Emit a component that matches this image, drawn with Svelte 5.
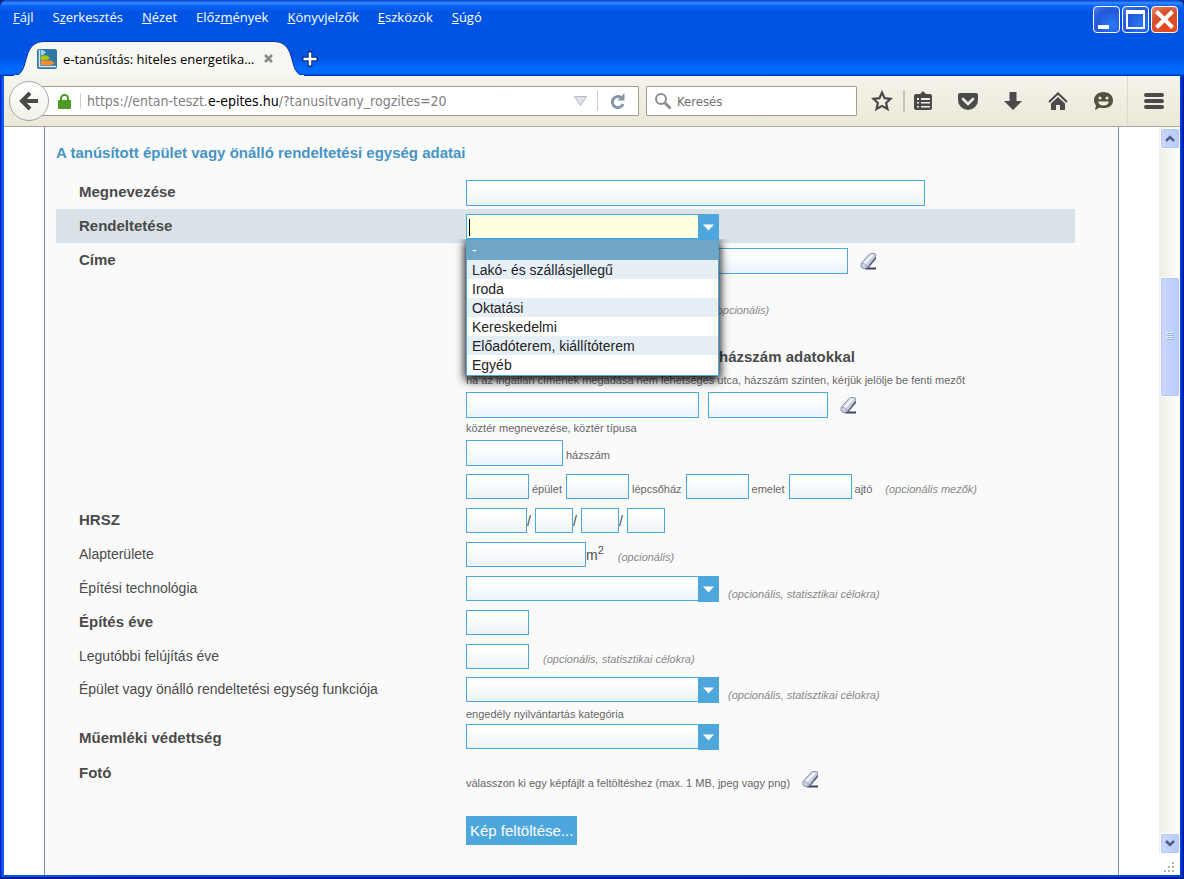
<script>
  const menus = [
    ['', 'F', 'ájl'],
    ['S', 'z', 'erkesztés'],
    ['', 'N', 'ézet'],
    ['Előz', 'm', 'ények'],
    ['', 'K', 'önyvjelzők'],
    ['', 'E', 'szközök'],
    ['', 'S', 'úgó']
  ];

  const purposes = [
    '-',
    'Lakó- és szállásjellegű',
    'Iroda',
    'Oktatási',
    'Kereskedelmi',
    'Előadóterem, kiállítóterem',
    'Egyéb'
  ];

  let selected = $state(0);
  let purpose = $state('');

  function choose(index) {
    selected = index;
    purpose = index === 0 ? '' : purposes[index];
  }
</script>

<svelte:head>
  <title>e-tanúsítás: hiteles energetika…</title>
</svelte:head>

{#snippet eraser()}
  <button type="button" class="eraser" aria-label="Törlés">
    <svg width="17" height="17" viewBox="0 0 17 17">
      <path d="M4 14.500h12v2H5z" fill="#3f3f68" />
      <path d="M8 15.500 16 6V3.500L7 13z" fill="#55597c" />
      <path d="M1 10.500 8.500 2q1.500-1.500 3.500-1.500h2q2.500 0 1.500 3L8 13.500q-1.500 2-3.500 2H3Q0 15 1 10.500z" fill="#c9d0dd" stroke="#8e97ab" />
      <path d="M4.500 10.500 12 2.500" stroke="#f4f7fb" stroke-width="2.500" stroke-linecap="round" fill="none" />
      <path d="M2 10.500q4-.5 4.500 4" stroke="#97a2b8" fill="none" />
    </svg>
  </button>
{/snippet}

{#snippet arrow()}
  <span class="arrow">
    <svg width="11" height="7" viewBox="0 0 11 7"><path d="M0 .5h11L5.500 6.500z" fill="#fff" /></svg>
  </span>
{/snippet}

<div class="window">
  <header class="titlebar">
    <nav class="menubar">
      {#each menus as [before, key, after]}
        <button type="button" class="menu">{before}<u>{key}</u>{after}</button>
      {/each}
      <div class="window-buttons">
        <button type="button" class="win" aria-label="Kis méret">
          <svg width="25" height="25" viewBox="0 0 25 25"><path d="M4 18h11v4H4z" fill="#fff" /></svg>
        </button>
        <button type="button" class="win" aria-label="Teljes méret">
          <svg width="25" height="25" viewBox="0 0 25 25"><path d="M3 3h19v19H3zM5 7v13h15V7z" fill="#fff" fill-rule="evenodd" /></svg>
        </button>
        <button type="button" class="win close" aria-label="Bezárás">
          <svg width="25" height="25" viewBox="0 0 25 25"><path d="m4.500 4.500 16 16m0-16-16 16" stroke="#fff" stroke-width="4" /></svg>
        </button>
      </div>
    </nav>
    <div class="tabs">
      <div class="tab">
        <svg class="tab-shape" width="290" height="35" viewBox="0 0 290 35">
          <path d="M0 35C9 34 10 25 13 15 16 5 21 .5 31 .5H259C269 .5 274 5 277 15 280 25 281 34 290 35z" fill="#f7f6f0" stroke="#0034a8" />
          <path d="M0 35h290" stroke="#f5f4ec" stroke-width="2" />
        </svg>
        <svg class="favicon" width="20" height="20" viewBox="0 0 20 20">
          <rect width="20" height="20" rx="2" fill="#2f78a4" />
          <path d="M2.500 1v16.500H19" stroke="#dbe8f0" stroke-width="1.500" fill="none" />
          <path d="M4 1h2l3 2.500L6 6H4z" fill="#9fd0ee" />
          <path d="M4 6.500h6L13 9l-3 2H4z" fill="#a8c800" />
          <path d="M4 11.500h10l4 2.500-4 2H4z" fill="#ff8a28" />
        </svg>
        <span class="tab-title">e-tanúsítás: hiteles energetika…</span>
        <button type="button" class="tab-close" aria-label="Lap bezárása">
          <svg width="9" height="9" viewBox="0 0 9 9"><path d="m1 1 7 7m0-7-7 7" stroke="#858b90" stroke-width="2.500" /></svg>
        </button>
      </div>
      <button type="button" class="new-tab" aria-label="Új lap">
        <svg width="16" height="16" viewBox="0 0 16 16">
          <path d="M8 0v16M0 8h16" stroke="#0b2a78" stroke-width="4.500" />
          <path d="M8 1.500v13M1.500 8h13" stroke="#fff" stroke-width="2.500" />
        </svg>
      </button>
    </div>
  </header>

  <div class="navbar">
    <button type="button" class="back" aria-label="Vissza">
      <svg width="20" height="20" viewBox="0 0 20 20"><path d="M11 2 3 10l8 8M4 10h15" stroke="#4a4a4a" stroke-width="4" fill="none" /></svg>
    </button>
    <div class="urlbar">
      <svg width="13" height="15" viewBox="0 0 13 15">
        <path d="M3 7V4.500a3.500 3.500 0 0 1 7 0V7" stroke="#4b9a22" stroke-width="2" fill="none" />
        <rect y="6" width="13" height="9" rx="1" fill="#4b9a22" />
      </svg>
      <div class="url">https://entan-teszt.<b>e-epites.hu</b>/?tanusitvany_rogzites=20</div>
      <svg width="13" height="10" viewBox="0 0 13 10"><path d="M.5 .5h12L6.500 9.500z" fill="#dfe3ea" stroke="#b4bac4" /></svg>
      <button type="button" class="reload" aria-label="Újratöltés">
        <svg width="16" height="16" viewBox="0 0 16 16">
          <path d="M11 4.500A5.500 5.500 0 1 0 13 11" stroke="#8796a5" stroke-width="3" fill="none" />
          <path d="M14.500 0v7.500H7.500z" fill="#8796a5" />
        </svg>
      </button>
    </div>
    <label class="search">
      <svg width="18" height="18" viewBox="0 0 18 18">
        <circle cx="7" cy="7" r="5" stroke="#8d8d8d" stroke-width="2" fill="none" />
        <path d="m10.500 10.500 6 6" stroke="#8d8d8d" stroke-width="3" />
      </svg>
      <input type="text" placeholder="Keresés" aria-label="Keresés" />
    </label>
    <div class="tools">
      <button type="button" class="star" aria-label="Könyvjelzőzés">
        <svg width="22" height="22" viewBox="0 0 22 22"><path d="m11 2.500 2.600 5.700 6 .6-4.500 4.200 1.400 6L11 15.900 5.500 19l1.400-6-4.500-4.200 6-.6z" stroke="#4a4a4a" stroke-width="2.200" fill="none" /></svg>
      </button>
      <button type="button" class="listing" aria-label="Könyvjelzők">
        <svg width="20" height="20" viewBox="0 0 20 20">
          <path d="M3 3h4l3-3 3 3h4q2 0 2 2v12q0 2-2 2H3q-2 0-2-2V5q0-2 2-2z" fill="#4a4a4a" />
          <path d="M4 7h2v2H4zm4 0h9v2H8zm-4 4h2v1.500H4zm4 0h9v1.500H8zm-4 4h2v1.500H4zm4 0h9v1.500H8z" fill="#efede1" />
        </svg>
      </button>
      <button type="button" aria-label="Pocket">
        <svg width="22" height="19" viewBox="0 0 22 19">
          <path d="M3 1h16q2 0 2 2v5a10 10 0 0 1-20 0V3q0-2 2-2z" fill="#4a4a4a" />
          <path d="m6 7 5 5 5-5" stroke="#efede1" stroke-width="2.600" stroke-linecap="round" fill="none" />
        </svg>
      </button>
      <button type="button" aria-label="Letöltések">
        <svg width="18" height="20" viewBox="0 0 18 20"><path d="M5.500 1h7v9H18l-9 9-9-9h5.500z" fill="#4a4a4a" /></svg>
      </button>
      <button type="button" aria-label="Kezdőlap">
        <svg width="20" height="20" viewBox="0 0 20 20">
          <path d="m1 11 9-8.500 9 8.500" stroke="#4a4a4a" stroke-width="2" fill="none" />
          <path d="m10 6 7 6.500V19h-5v-5H8v5H3v-6.500z" fill="#4a4a4a" />
        </svg>
      </button>
      <button type="button" aria-label="Visszajelzés">
        <svg width="22" height="20" viewBox="0 0 22 20">
          <path d="M11.500 1C17 1 21 4.500 21 9.500S17 17 11.500 17q-2 0-3.500-.5L3 19l1-4.500Q2 12.500 2 9.500C2 4.500 6 1 11.500 1z" fill="#55513f" />
          <circle cx="8" cy="7" r="1.500" fill="#efede1" /><circle cx="15" cy="7" r="1.500" fill="#efede1" />
          <path d="M6 10.500h11q-1 4-5.500 4t-5.500-4z" fill="#efede1" />
        </svg>
      </button>
      <button type="button" class="hamburger" aria-label="Menü">
        <svg width="20" height="16" viewBox="0 0 20 16"><path d="M2 2h16M2 8h16M2 14h16" stroke="#4a4a4a" stroke-width="4" stroke-linecap="round" /></svg>
      </button>
    </div>
  </div>

  <div class="viewport">
    <main class="panel">
      <h2>A tanúsított épület vagy önálló rendeltetési egység adatai</h2>
      <form>
        <div class="row">
          <label class="name" for="name">Megnevezése</label>
          <div class="field"><div class="line"><input id="name" class="w-full" type="text" /></div></div>
        </div>

        <div class="row active">
          <label class="name" for="purpose">Rendeltetése</label>
          <div class="field">
            <div class="combo">
              <input id="purpose" type="text" role="combobox" aria-expanded="true" aria-controls="purpose-list" bind:value={purpose} />
              {@render arrow()}
              <span class="caret"></span>
              <ul id="purpose-list" role="listbox">
                {#each purposes as option, i}
                  <li role="option" aria-selected={i === selected}>
                    <button type="button" class:selected={i === selected} onclick={() => choose(i)}>{option}</button>
                  </li>
                {/each}
              </ul>
            </div>
          </div>
        </div>

        <div class="row address">
          <label class="name" for="city">Címe</label>
          <div class="field">
            <div class="line"><input id="city" class="w-city" type="text" />{@render eraser()}</div>
            <div class="line district">
              <input class="w-street" type="text" aria-label="Településrész" />
              <em>(opcionális)</em>
            </div>
            <label class="no-street"><input type="checkbox" /><span>házszám adatokkal</span></label>
            <div class="hint">ha az ingatlan címének megadása nem lehetséges utca, házszám szinten, kérjük jelölje be fenti mezőt</div>
            <div class="line">
              <input class="w-street" type="text" aria-label="köztér megnevezése" />
              <input class="w-medium street-type" type="text" aria-label="köztér típusa" />
              {@render eraser()}
            </div>
            <div class="hint tall">köztér megnevezése, köztér típusa</div>
            <div class="line number">
              <input id="house" class="w-house" type="text" /><label class="unit" for="house">házszám</label>
            </div>
            <div class="line">
              <input id="building" class="w-small" type="text" /><label class="unit" for="building">épület</label>
              <input id="stair" class="w-small" type="text" /><label class="unit" for="stair">lépcsőház</label>
              <input id="floor" class="w-small" type="text" /><label class="unit" for="floor">emelet</label>
              <input id="door" class="w-small" type="text" /><label class="unit" for="door">ajtó</label>
              <em class="after-unit">(opcionális mezők)</em>
            </div>
          </div>
        </div>

        <div class="row">
          <label class="name" for="lot">HRSZ</label>
          <div class="field">
            <div class="line lot">
              <input id="lot" class="w-lot" type="text" /><span>/</span>
              <input class="w-tiny" type="text" aria-label="HRSZ 2" /><span>/</span>
              <input class="w-tiny" type="text" aria-label="HRSZ 3" /><span>/</span>
              <input class="w-tiny" type="text" aria-label="HRSZ 4" />
            </div>
          </div>
        </div>

        <div class="row">
          <label class="name plain" for="area">Alapterülete</label>
          <div class="field">
            <div class="line"><input id="area" class="w-medium" type="text" /><span>m<sup>2</sup></span><em>(opcionális)</em></div>
          </div>
        </div>

        <div class="row">
          <label class="name plain" for="technology">Építési technológia</label>
          <div class="field">
            <div class="line">
              <div class="combo"><select id="technology"><option></option></select>{@render arrow()}</div>
              <em class="beside">(opcionális, statisztikai célokra)</em>
            </div>
          </div>
        </div>

        <div class="row">
          <label class="name" for="built">Építés éve</label>
          <div class="field"><div class="line"><input id="built" class="w-small" type="text" /></div></div>
        </div>

        <div class="row">
          <label class="name plain" for="renewed">Legutóbbi felújítás éve</label>
          <div class="field">
            <div class="line"><input id="renewed" class="w-small" type="text" /><em>(opcionális, statisztikai célokra)</em></div>
          </div>
        </div>

        <div class="row function">
          <label class="name plain" for="function">Épület vagy önálló rendeltetési egység funkciója</label>
          <div class="field">
            <div class="line">
              <div class="combo"><select id="function"><option></option></select>{@render arrow()}</div>
              <em class="beside">(opcionális, statisztikai célokra)</em>
            </div>
            <div class="hint">engedély nyilvántartás kategória</div>
          </div>
        </div>

        <div class="row monument">
          <label class="name" for="monument">Műemléki védettség</label>
          <div class="field">
            <div class="combo"><select id="monument"><option></option></select>{@render arrow()}</div>
          </div>
        </div>

        <div class="row">
          <span class="name">Fotó</span>
          <div class="field">
            <div class="line photo"><span class="hint">válasszon ki egy képfájlt a feltöltéshez (max. 1 MB, jpeg vagy png)</span>{@render eraser()}</div>
            <button type="button" class="upload">Kép feltöltése...</button>
          </div>
        </div>
      </form>
    </main>

    <aside class="scroll">
      <div class="scrollbar">
        <button type="button" class="scroll-end" aria-label="Fel">
          <svg width="10" height="7" viewBox="0 0 10 7"><path d="m1 6 4-4 4 4" stroke="#4d6185" stroke-width="2.500" fill="none" /></svg>
        </button>
        <div class="above"></div>
        <div class="thumb">
          <svg width="8" height="9" viewBox="0 0 8 9">
            <path d="M0 .5h7M0 2.500h7M0 4.500h7M0 6.500h7" stroke="#eef4fe" />
            <path d="M1 1.500h7M1 3.500h7M1 5.500h7M1 7.500h7" stroke="#8cb0f8" />
          </svg>
        </div>
        <div class="below"></div>
        <button type="button" class="scroll-end" aria-label="Le">
          <svg width="10" height="7" viewBox="0 0 10 7"><path d="m1 1 4 4 4-4" stroke="#4d6185" stroke-width="2.500" fill="none" /></svg>
        </button>
      </div>
      <div class="grip">
        <svg width="11" height="11" viewBox="0 0 11 11"><path d="M8 0h2v2H8zM4 4h2v2H4zm4 0h2v2H8zM0 8h2v2H0zm4 0h2v2H4zm4 0h2v2H8z" fill="#b8b4a2" /></svg>
      </div>
    </aside>
  </div>
</div>

<style>
  :global(body) {
    margin: 0;
    background: #0a2a8a;
  }

  .window {
    display: flex;
    flex-direction: column;
    min-height: 100vh;
    box-sizing: border-box;
    padding: 0 4px 4px;
    border-radius: 8px 8px 0 0;
    background: linear-gradient(to right, #0019cf, #0831d9 1px, #166aee 3px, #0855dd 4px, #0040d8 50%, #0046e0 calc(100% - 4px), #0030c8 calc(100% - 2px), #00138c);
    box-shadow: inset 0 -2px #001a9c;
    font-family: 'Liberation Sans', Arial, sans-serif;
    font-size: 14px;
    color: #4a4a4a;
  }

  button {
    padding: 0;
    border: 0;
    background: none;
    font: inherit;
    color: inherit;
  }

  svg {
    display: block;
    flex: none;
  }

  /* title bar */
  .titlebar {
    margin: 0 -4px;
    padding: 0 4px;
    height: 75px;
    border-bottom: 1px solid #0034a8;
    border-radius: 8px 8px 0 0;
    background: linear-gradient(#0a3ed0, #2f8cff 3px, #0a62f2 6px, #0054e4 12px, #0053e3 58px, #0068fd 67px, #006aff 73px, #004fe0);
    font-family: 'Open Sans', Tahoma, sans-serif;
    font-size: 13px;
    color: #fff;
  }

  .menubar {
    display: flex;
    gap: 19px;
    height: 41px;
    padding: 0 2px 0 9px;
  }

  .menu {
    height: 33px;
  }

  .window-buttons {
    display: flex;
    gap: 2px;
    margin: 6px 0 0 auto;
  }

  .win {
    width: 27px;
    height: 27px;
    box-sizing: border-box;
    border: 1px solid #fff;
    border-radius: 4px;
    background: radial-gradient(circle at 70% 70%, #2a7af8, #2456d8 60%, #4a82ee);
  }

  .win.close {
    background: radial-gradient(circle at 70% 80%, #e8481a, #d8502e 60%, #f08a68);
  }

  .tabs {
    display: flex;
    align-items: center;
    height: 35px;
    padding-left: 10px;
  }

  .tab {
    position: relative;
    display: flex;
    align-items: center;
    gap: 6px;
    box-sizing: border-box;
    width: 284px;
    height: 35px;
    padding: 0 25px 0 23px;
    color: #000;
  }

  .tab-shape {
    position: absolute;
    left: 0;
    top: 0;
  }

  .favicon,
  .tab-title,
  .tab-close {
    position: relative;
  }

  .tab-title {
    width: 195px;
    white-space: nowrap;
  }

  .new-tab {
    margin-left: 4px;
  }

  /* navigation toolbar */
  .navbar {
    display: flex;
    align-items: center;
    height: 50px;
    border-bottom: 1px solid #aca899;
    background: linear-gradient(#f5f4ec, #ebe8d7);
    font-family: 'DejaVu Sans Condensed', Tahoma, sans-serif;
    font-size: 13px;
  }

  .back {
    position: relative;
    display: grid;
    place-items: center;
    width: 40px;
    height: 40px;
    margin-left: 5px;
    border: 1px solid #a0a8ac;
    border-radius: 50%;
    background: linear-gradient(#fff, #f2f0e8);
    box-sizing: border-box;
  }

  .urlbar,
  .search {
    display: flex;
    align-items: center;
    height: 30px;
    box-sizing: border-box;
    border: 1px solid #9d9d90;
    border-radius: 1px;
    background: #fff;
  }

  .urlbar {
    flex: 1;
    margin-left: -10px;
    padding-left: 18px;
  }

  .url {
    flex: 1;
    margin-left: 9px;
    padding-left: 6px;
    border-left: 1px solid #d0d0d0;
    font-size: 14px;
    white-space: nowrap;
    color: #808080;
  }

  .url b {
    font-weight: 400;
    color: #000;
  }

  .reload {
    margin-left: 10px;
    padding: 2px 12px;
    border-left: 1px solid #c8c8c8;
  }

  .search {
    width: 211px;
    margin-left: 7px;
    padding-left: 7px;
    gap: 5px;
  }

  .search input {
    width: 100%;
    padding: 0;
    border: 0;
    outline: 0;
    font: inherit;
  }

  .search input::placeholder {
    color: #707070;
    opacity: 1;
  }

  .tools {
    display: flex;
    align-self: stretch;
    align-items: center;
    margin-left: 4px;
  }

  .tools button {
    display: grid;
    place-items: center;
    width: 45px;
    height: 22px;
  }

  .tools .star {
    width: 42px;
  }

  .tools .listing {
    width: 38px;
    border-left: 2px solid #c6c6be;
    box-sizing: border-box;
    margin-right: 4px;
  }

  .tools .hamburger {
    width: 53px;
    height: 100%;
    margin-left: 2px;
    border-left: 1px solid #dcd9ca;
    box-sizing: border-box;
  }

  /* page */
  .viewport {
    display: flex;
    flex: 1;
    background: #fff;
  }

  .panel {
    flex: 1;
    margin: 0 40px;
    padding: 0 43px 0 11px;
    border: solid #7194a5;
    border-width: 0 1px;
    background: #fafafa;
  }

  h2 {
    margin: 0;
    padding: 18px 0 14px;
    font-size: 15px;
    line-height: 16px;
    color: #4694c4;
  }

  .row {
    display: flex;
    min-height: 34px;
    box-sizing: border-box;
    padding: 5px 0 3px 23px;
  }

  .row.active {
    background: #dae2e8;
  }

  .row.address {
    padding-bottom: 4px;
  }

  .name {
    width: 387px;
    flex: none;
    font-size: 15px;
    line-height: 24px;
    font-weight: 700;
  }

  .name.plain {
    font-size: 14px;
    font-weight: 400;
  }

  .field {
    flex: 1;
  }

  .line {
    display: flex;
    align-items: center;
  }

  .field input[type='text'],
  select {
    box-sizing: border-box;
    height: 25px;
    margin: 0;
    padding: 0 5px;
    border: 1px solid #4da6dc;
    border-radius: 0;
    outline: 0;
    background: linear-gradient(#fff 20%, #eaf3f9);
    font: inherit;
  }

  .w-full { width: 459px; }
  .w-city { width: 382px; }
  .w-street { width: 233px; }
  .w-medium { width: 120px; }
  .w-house { width: 97px; }
  .w-small { width: 63px; }
  .w-lot { width: 61px; }
  .w-tiny { width: 38px; }

  .field input.w-full,
  .field input.w-city,
  .field input.w-street,
  .field input.street-type,
  .field input.w-house {
    height: 26px;
  }

  .field input.street-type {
    margin-left: 9px;
  }

  .combo {
    position: relative;
    display: flex;
    width: 253px;
  }

  .combo input,
  select {
    width: 100%;
    appearance: none;
  }

  .field .combo input[type='text'] {
    background: #ffffe1;
  }

  .arrow {
    position: absolute;
    right: 0;
    top: 0;
    display: grid;
    place-items: center;
    width: 21px;
    height: 26px;
    background: #4da6dc;
    pointer-events: none;
  }

  .caret {
    position: absolute;
    left: 3px;
    top: 5px;
    width: 1px;
    height: 17px;
    background: #000;
  }

  ul {
    position: absolute;
    z-index: 1;
    left: 0;
    top: 25px;
    right: 0;
    margin: 0;
    padding: 0;
    border: 1px solid #4da6dc;
    background: #fff;
    box-shadow: 0 3px 9px 1px #000;
    clip-path: inset(0 -20px -20px);
    list-style: none;
  }

  ul button {
    display: block;
    width: 100%;
    height: 19px;
    padding: 0 5px;
    text-align: left;
    color: #222;
  }

  li:nth-child(even) button {
    background: #e6eff5;
  }

  li:last-child button {
    height: 20px;
  }

  ul button.selected {
    height: 20px;
    background: #6fa5c5;
    color: #fff;
  }

  .eraser {
    margin-left: 12px;
  }

  .hint,
  .unit,
  em {
    font-size: 11px;
    line-height: 12px;
    color: #666;
  }

  em {
    margin: 4px 0 0 14px;
    color: #888;
  }

  em.beside {
    margin: 10px 0 0 9px;
  }

  em.after-unit {
    margin-left: 9px;
  }

  .district {
    margin-top: 21px;
  }

  .no-street {
    display: flex;
    align-items: center;
    height: 20px;
    margin-top: 25px;
    padding-bottom: 8px;
    font-size: 15px;
    font-weight: 700;
  }

  .no-street input {
    margin: 0;
  }

  .no-street span {
    margin-left: 240px;
  }

  .no-street + .hint {
    padding-bottom: 6px;
  }

  .hint.tall {
    padding: 4px 0 6px;
  }

  .unit {
    margin: 4px 4px 0 3px;
  }

  .number {
    margin-bottom: 8px;
  }

  .lot span {
    width: 8px;
  }

  sup {
    font-size: 11px;
    line-height: 0;
  }

  .function {
    padding-top: 4px;
    padding-bottom: 0;
  }

  .function .hint {
    padding-top: 6px;
  }

  .monument {
    padding-top: 4px;
    padding-bottom: 6px;
  }

  .monument .name {
    padding-top: 2px;
  }

  .photo {
    margin: 8px 0 27px;
  }

  .photo .hint {
    margin-top: 8px;
  }

  .photo .eraser {
    margin-left: 12px;
  }

  .upload {
    height: 29px;
    padding: 0 4px;
    background: #4da6dc;
    font-size: 15px;
    color: #fff;
  }

  /* scroll bar */
  .scroll {
    display: flex;
    flex-direction: column;
    width: 21px;
  }

  .scrollbar {
    display: flex;
    flex-direction: column;
    flex: 1;
    background: linear-gradient(to right, #eeede5, #fefefb);
  }

  .scroll-end,
  .thumb {
    display: grid;
    place-items: center;
    box-sizing: border-box;
    margin: 1px 0 0 1px;
    border: 1px solid #fff;
    border-radius: 3px;
    outline: 1px solid #b4c8f0;
    outline-offset: -2px;
    background: linear-gradient(to right, #cad8fd, #b9cbf8);
  }

  .scroll-end {
    height: 21px;
  }

  .above { flex: 127; }
  .thumb { flex: 119; }
  .below { flex: 436; }

  .grip {
    display: flex;
    align-items: flex-end;
    justify-content: center;
    height: 19px;
    padding-bottom: 2px;
    background: #fff;
  }
</style>
